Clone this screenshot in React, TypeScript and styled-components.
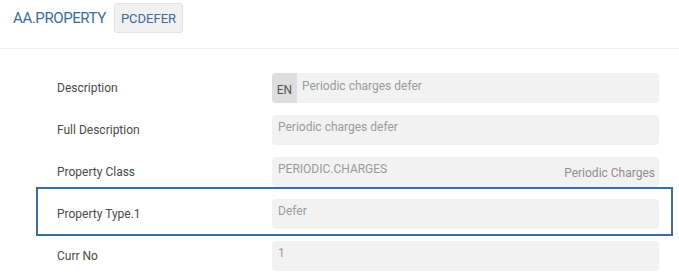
import { createGlobalStyle } from 'styled-components';
import styled from 'styled-components';

const GlobalStyle = createGlobalStyle`
    html, body {
        margin: 0;
        padding: 0;
        background: #fff;
    }
    body {
        font-family: Roboto, 'Liberation Sans', Arial, sans-serif;
        -webkit-font-smoothing: antialiased;
    }
`;

const Page = styled.div`
    width: 679px;
    height: 280px;
    overflow: hidden;
    background: #fff;
`;

const Header = styled.div`
    display: flex;
    align-items: center;
    gap: 8px;
    padding: 3px 13px 15px;
    border-bottom: 1px solid #f0f0f0;
`;

const Title = styled.span`
    font-size: 15px;
    letter-spacing: -0.4px;
    color: #3a6c9e;
`;

const Badge = styled.span`
    display: flex;
    align-items: center;
    box-sizing: border-box;
    height: 30px;
    padding: 0 6px;
    font-size: 13px;
    color: #3a6c9e;
    background: #f1f1f1;
    border: 1px solid #e3e3e3;
    border-radius: 3px;
`;

const Form = styled.div`
    display: flex;
    flex-direction: column;
    padding: 18px 20px 0 57px;
`;

const Row = styled.div<{ $highlight?: boolean }>`
    position: relative;
    display: flex;
    align-items: center;
    padding: 6px 0;

    ${({ $highlight }) =>
        $highlight &&
        `
        &::after {
            content: '';
            position: absolute;
            top: -6px;
            bottom: -1px;
            left: -21px;
            right: -14px;
            border: 2px solid #3e6c98;
            pointer-events: none;
        }
    `}
`;

const Label = styled.div`
    width: 215px;
    flex-shrink: 0;
    font-size: 12px;
    color: #4a4a4a;
`;

const Field = styled.div`
    display: flex;
    align-items: stretch;
    justify-content: space-between;
    width: 387px;
    height: 30px;
    border-radius: 4px;
    background: #f2f2f2;
    overflow: hidden;
`;

const Value = styled.span<{ $top?: number }>`
    padding: ${({ $top = 5 }) => $top}px 6px 0;
    font-size: 12px;
    line-height: 14.4px;
    color: #9b9b9b;
`;

const Lang = styled.span`
    width: 25px;
    flex-shrink: 0;
    box-sizing: border-box;
    padding-top: 10px;
    text-align: center;
    font-size: 12px;
    line-height: 14.4px;
    color: #555;
    background: #dedede;
`;

const Extra = styled.span`
    margin-left: auto;
    padding: 9px 4px 0 0;
    font-size: 12px;
    line-height: 14.4px;
    color: #8f8f8f;
`;

const Main = styled.div`
    display: flex;
`;

const App = () => (
    <Page>
        <GlobalStyle />
        <Header>
            <Title>AA.PROPERTY</Title>
            <Badge>PCDEFER</Badge>
        </Header>
        <Form>
            <Row>
                <Label>Description</Label>
                <Field>
                    <Main>
                        <Lang>EN</Lang>
                        <Value $top={6} style={{ paddingLeft: 5 }}>
                            Periodic charges defer
                        </Value>
                    </Main>
                </Field>
            </Row>
            <Row>
                <Label>Full Description</Label>
                <Field>
                    <Value>Periodic charges defer</Value>
                </Field>
            </Row>
            <Row>
                <Label>Property Class</Label>
                <Field>
                    <Value>PERIODIC.CHARGES</Value>
                    <Extra>Periodic Charges</Extra>
                </Field>
            </Row>
            <Row $highlight>
                <Label>Property Type.1</Label>
                <Field>
                    <Value>Defer</Value>
                </Field>
            </Row>
            <Row>
                <Label>Curr No</Label>
                <Field>
                    <Value>1</Value>
                </Field>
            </Row>
        </Form>
    </Page>
);

export default App;
